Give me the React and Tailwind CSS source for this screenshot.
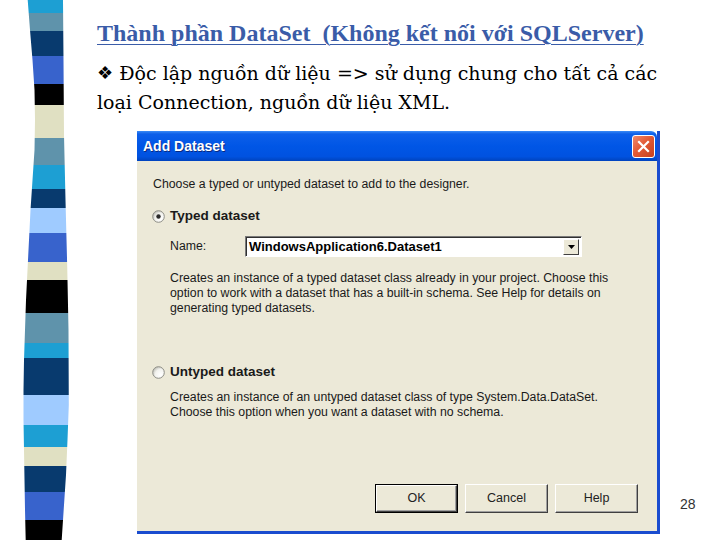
import React from "react";

const bands = [
  [0, 13, "#1d9fd3"], [13, 31, "#5f93ab"], [31, 56, "#083a6e"], [56, 84, "#3863cc"],
  [84, 105, "#000000"], [105, 138, "#e0e0c2"], [138, 165, "#5f93ab"], [165, 189, "#1d9fd3"],
  [189, 208, "#083a6e"], [208, 233, "#9fcbff"], [233, 262, "#3863cc"], [262, 280, "#e0e0c2"],
  [280, 313, "#000000"], [313, 343, "#5f93ab"], [343, 358, "#1d9fd3"], [358, 395, "#083a6e"],
  [395, 425, "#9fcbff"], [425, 447, "#1d9fd3"], [447, 466, "#e0e0c2"], [466, 492, "#083a6e"],
  [492, 520, "#3863cc"], [520, 540, "#000000"],
];

const leftEdge = [
  [27.7, 0], [30, 30], [32.5, 60], [34.5, 90], [35, 120], [34.5, 150], [32.5, 180], [30.5, 210],
  [29, 240], [27.5, 270], [26, 300], [25, 330], [24, 360], [23.5, 390], [23.5, 420], [24, 450],
  [24.5, 480], [25, 510], [25.7, 540],
];
const rightEdge = [
  [63, 0], [63.5, 60], [64, 135], [65.5, 200], [67.3, 270], [68.5, 330], [68.8, 405],
  [67.5, 440], [66, 475], [64, 505], [61.7, 540],
];

const serif = '"Liberation Serif", "DejaVu Serif", serif';
const bodySerif = '"DejaVu Serif", "Liberation Serif", serif';
const sans = '"Liberation Sans", Arial, sans-serif';

const t1 = "Thành phần DataSet\u00a0 (Không kết nối với SQLServer)".normalize("NFC");
const l1 = " Độc lập nguồn dữ liệu => sử dụng chung cho tất cả các".normalize("NFC");
const l2 = "loại Connection, nguồn dữ liệu XML.".normalize("NFC");

function Stripe() {
  const pts = [...leftEdge, ...rightEdge.slice().reverse()]
    .map(([x, y]) => `${x},${y}`)
    .join(" ");
  return (
    <svg width="97" height="540" viewBox="0 0 97 540" className="shrink-0 block">
      <defs>
        <clipPath id="stripeClip">
          <polygon points={pts} />
        </clipPath>
      </defs>
      <g clipPath="url(#stripeClip)">
        {bands.map(([a, b, c], i) => (
          <rect key={i} x="0" y={a} width="97" height={b - a} fill={c} />
        ))}
      </g>
    </svg>
  );
}

function Radio({ checked }) {
  const id = checked ? "rg1" : "rg2";
  return (
    <svg width="13" height="13" viewBox="0 0 13 13" className="shrink-0">
      <defs>
        <radialGradient id={id} cx="0.7" cy="0.7" r="0.8">
          <stop offset="0" stopColor="#ffffff" />
          <stop offset="0.6" stopColor="#f2f2ee" />
          <stop offset="1" stopColor="#b9b9b0" />
        </radialGradient>
      </defs>
      <circle cx="6.5" cy="6.5" r="5.8" fill={`url(#${id})`} stroke="#8d8d86" strokeWidth="1" />
      {checked && <circle cx="6.5" cy="6.5" r="2.2" fill="#2a2a2a" />}
    </svg>
  );
}

function XPButton({ label, def }) {
  if (def) {
    return (
      <div className="border border-black">
        <div className="w-[81px] h-[27px] flex items-center justify-center bg-[#ece9d8] border border-t-white border-l-white border-b-[#404040] border-r-[#404040] shadow-[inset_-1px_-1px_0_#a0a0a0] text-[12.5px] text-[#222]">
          {label}
        </div>
      </div>
    );
  }
  return (
    <div className="w-[83px] h-[29px] flex items-center justify-center bg-[#ece9d8] border border-t-white border-l-white border-b-[#404040] border-r-[#404040] shadow-[inset_-1px_-1px_0_#a0a0a0] text-[12.5px] text-[#222]">
      {label}
    </div>
  );
}

export default function App() {
  return (
    <div lang="vi" className="w-[720px] h-[540px] bg-white flex overflow-hidden">
      <Stripe />
      <div className="flex flex-col">
        <div
          className="mt-[18px] text-[24px] leading-[30px] font-bold underline decoration-1 underline-offset-[3px] text-[#3a5ca8] whitespace-nowrap"
          style={{ fontFamily: serif }}
        >
          {t1}
        </div>
        <div className="mt-[11px] text-[19px] leading-[29px] text-black font-normal" style={{ fontFamily: bodySerif }}>
          <div className="whitespace-nowrap">
            <span className="text-[18px] relative top-[-1px]" style={{ fontFamily: '"DejaVu Sans", sans-serif' }}>❖</span>
            <span>{l1}</span>
          </div>
          <div className="whitespace-nowrap">{l2}</div>
        </div>
        <div className="flex items-end mt-[14px]">
          <div
            className="ml-[40px] w-[523px] h-[403px] flex flex-col border-r-[3px] border-b-[3px] border-[#1a4ccf]"
            style={{ fontFamily: sans }}
          >
            <div className="h-[30px] flex items-center justify-between pl-[6px] pr-[2px] rounded-tr-[6px] bg-[linear-gradient(180deg,#3b8bf5_0%,#0d5fe9_10%,#0056e6_50%,#0052e0_85%,#0043be_100%)]">
              <span className="text-white font-bold text-[14px] [text-shadow:1px_1px_0_#0a2a80]">Add Dataset</span>
              <div className="w-[23px] h-[23px] rounded-[3px] border border-white bg-[linear-gradient(135deg,#f08a6c_0%,#e25a36_45%,#c7401e_100%)] flex items-center justify-center">
                <svg width="13" height="13" viewBox="0 0 13 13">
                  <path d="M2 2 L11 11 M11 2 L2 11" stroke="white" strokeWidth="2.2" strokeLinecap="square" />
                </svg>
              </div>
            </div>
            <div className="flex-1 bg-[#ece9d8] flex flex-col text-[12.3px] text-[#1a1a1a]">
              <div className="mt-[17px] pl-[16px] leading-[13px]">Choose a typed or untyped dataset to add to the designer.</div>
              <div className="mt-[19px] pl-[15px] flex items-center gap-[5px] h-[13px]">
                <Radio checked />
                <span className="font-bold text-[13.5px]">Typed dataset</span>
              </div>
              <div className="mt-[13px] pl-[33px] flex items-center h-[21px]">
                <span className="w-[75px]">Name:</span>
                <div className="w-[337px] h-[21px] bg-white border border-t-[#7a7a7a] border-l-[#7a7a7a] border-b-white border-r-white shadow-[inset_1px_1px_0_#303030] flex items-center pl-[3px] pr-[2px]">
                  <span className="flex-1 font-bold text-[13px] text-black">WindowsApplication6.Dataset1</span>
                  <div className="w-[16px] h-[16px] bg-[#ece9d8] border border-t-white border-l-white border-b-[#404040] border-r-[#404040] flex items-center justify-center">
                    <svg width="7" height="4" viewBox="0 0 7 4"><path d="M0 0 H7 L3.5 4 Z" fill="#000" /></svg>
                  </div>
                </div>
              </div>
              <div className="mt-[14px] pl-[33px] leading-[15px]">
                <div>Creates an instance of a typed dataset class already in your project. Choose this</div>
                <div>option to work with a dataset that has a built-in schema. See Help for details on</div>
                <div>generating typed datasets.</div>
              </div>
              <div className="mt-[50px] pl-[15px] flex items-center gap-[5px] h-[13px]">
                <Radio />
                <span className="font-bold text-[13.5px]">Untyped dataset</span>
              </div>
              <div className="mt-[11px] pl-[33px] leading-[15px]">
                <div>Creates an instance of an untyped dataset class of type System.Data.DataSet.</div>
                <div>Choose this option when you want a dataset with no schema.</div>
              </div>
              <div className="mt-auto mb-[18px] flex justify-end gap-[7px] pr-[19px]">
                <XPButton label="OK" def />
                <XPButton label="Cancel" />
                <XPButton label="Help" />
              </div>
            </div>
          </div>
          <div className="ml-[20px] mb-[19px] text-[14px] text-[#333]" style={{ fontFamily: sans }}>
            28
          </div>
        </div>
      </div>
    </div>
  );
}
